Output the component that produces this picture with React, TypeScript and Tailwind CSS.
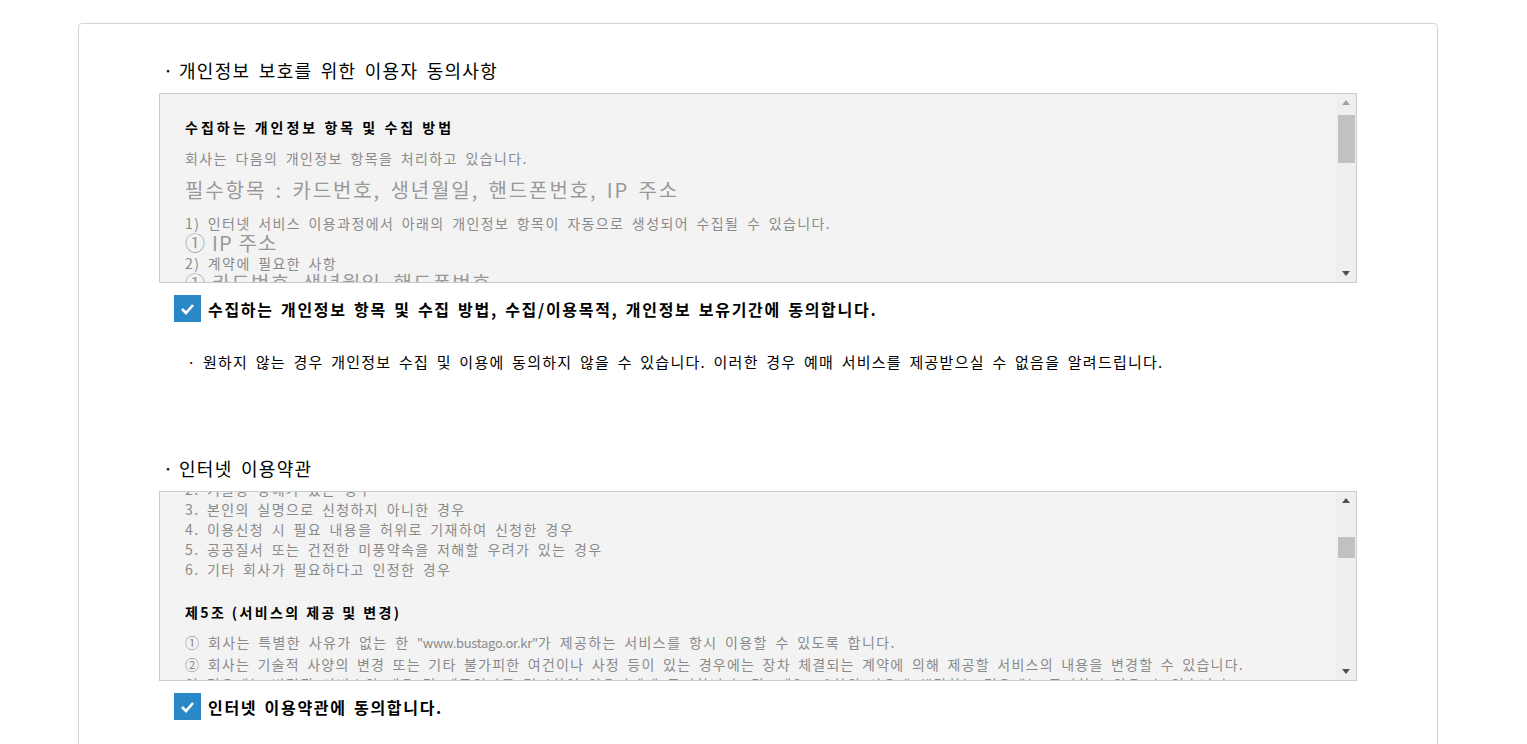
import React from 'react';

const font = 'font-["Noto_Sans_CJK_KR","Liberation_Sans",sans-serif]';

const ScrollBar: React.FC<{ thumbTop: number; thumbHeight: number; upDisabled?: boolean }> = ({
  thumbTop,
  thumbHeight,
  upDisabled,
}) => (
  <div className="w-[20px] shrink-0 bg-[#efefef] flex flex-col">
    <div className="h-[17px] flex items-center justify-center">
      <svg width="8" height="5" viewBox="0 0 8 5">
        <path d="M0 5 L4 0 L8 5 Z" fill={upDisabled ? '#a3a3a3' : '#505050'} />
      </svg>
    </div>
    <div className="flex-1 relative">
      <div
        className="absolute left-[2px] w-[17px] bg-[#c1c1c1]"
        style={{ top: thumbTop, height: thumbHeight }}
      />
    </div>
    <div className="h-[17px] flex items-center justify-center">
      <svg width="8" height="5" viewBox="0 0 8 5">
        <path d="M0 0 L8 0 L4 5 Z" fill="#505050" />
      </svg>
    </div>
  </div>
);

const Check: React.FC<{ label: string }> = ({ label }) => (
  <label className="flex items-center gap-[7px] ml-[15px] mt-[12px]">
    <span className="w-[27px] h-[27px] bg-[#2a88c9] flex items-center justify-center">
      <svg width="15" height="12" viewBox="0 0 15 12">
        <path d="M2 6 L6 10 L13 2" stroke="#fff" strokeWidth="2.6" fill="none" />
      </svg>
    </span>
    <span className="text-[16px] font-bold text-black tracking-[1.7px] [word-spacing:2px]">{label}</span>
  </label>
);

const Title: React.FC<{ text: string }> = ({ text }) => (
  <h2 className="flex items-center h-[24px] text-[18px] text-black leading-[24px]">
    <span className="w-[20px] pl-[4px]">·</span>
    <span className="tracking-[1.3px] [word-spacing:3px]">{text}</span>
  </h2>
);

const grayLine = 'text-[14px] leading-[20px] text-[#8a8a8a] tracking-[1.4px] [word-spacing:3px]';
const bigGray = 'text-[20px] leading-[20px] text-[#999999] tracking-[1.2px]';

export default function App() {
  return (
    <div className={`${font} bg-white min-h-[744px] pt-[23px]`}>
      <div className="ml-[78px] w-[1360px] border border-[#d4d4d4] rounded-[4px] px-[80px] pt-[34px] pb-[60px]">
        <Title text="개인정보 보호를 위한 이용자 동의사항" />
        <div className="mt-[11px] h-[190px] border border-[#cccccc] bg-[#f3f3f3] flex">
          <div className="flex-1 overflow-hidden pl-[25px] pt-[23px]">
            <p className="text-[14px] leading-[20px] font-bold text-black tracking-[3px]">
              수집하는 개인정보 항목 및 수집 방법
            </p>
            <p className={`${grayLine} mt-[11px]`}>회사는 다음의 개인정보 항목을 처리하고 있습니다.</p>
            <p className="text-[20px] leading-[30px] text-[#999999] mt-[7px] tracking-[1.9px] [word-spacing:3px]">
              필수항목 : 카드번호, 생년월일, 핸드폰번호, IP 주소
            </p>
            <p className={`${grayLine} mt-[8px]`}>
              1) 인터넷 서비스 이용과정에서 아래의 개인정보 항목이 자동으로 생성되어 수집될 수 있습니다.
            </p>
            <p className={bigGray}>① IP 주소</p>
            <p className={grayLine}>2) 계약에 필요한 사항</p>
            <p className={bigGray}>① 카드번호, 생년월일, 핸드폰번호</p>
          </div>
          <ScrollBar thumbTop={4} thumbHeight={48} upDisabled />
        </div>
        <Check label="수집하는 개인정보 항목 및 수집 방법, 수집/이용목적, 개인정보 보유기간에 동의합니다." />
        <p className="mt-[28px] ml-[28px] flex text-[15px] leading-[24px] text-black">
          <span className="w-[16px]">·</span>
          <span className="tracking-[1.25px] [word-spacing:3px]">
            원하지 않는 경우 개인정보 수집 및 이용에 동의하지 않을 수 있습니다. 이러한 경우 예매 서비스를 제공받으실 수
            없음을 알려드립니다.
          </span>
        </p>

        <div className="mt-[82px]">
          <Title text="인터넷 이용약관" />
        </div>
        <div className="mt-[11px] h-[190px] border border-[#cccccc] bg-[#f3f3f3] flex">
          <div className="flex-1 overflow-hidden pl-[25px]">
            <div className="-mt-[13px]">
              <p className={grayLine}>2. 기술상 장애가 있는 경우</p>
              <p className={grayLine}>3. 본인의 실명으로 신청하지 아니한 경우</p>
              <p className={grayLine}>4. 이용신청 시 필요 내용을 허위로 기재하여 신청한 경우</p>
              <p className={grayLine}>5. 공공질서 또는 건전한 미풍약속을 저해할 우려가 있는 경우</p>
              <p className={grayLine}>6. 기타 회사가 필요하다고 인정한 경우</p>
              <p className="mt-[23px] text-[14px] leading-[20px] font-bold text-black tracking-[2.4px]">
                제5조 (서비스의 제공 및 변경)
              </p>
              <p className={`${grayLine} mt-[10px]`}>
                ① 회사는 특별한 사유가 없는 한{' '}
                <span className="tracking-[-0.3px] text-[13px]">"www.bustago.or.kr"</span>가 제공하는 서비스를 항시
                이용할 수 있도록 합니다.
              </p>
              <p className={`${grayLine} mt-[1px] whitespace-nowrap tracking-[1.25px]`}>
                ② 회사는 기술적 사양의 변경 또는 기타 불가피한 여건이나 사정 등이 있는 경우에는 장차 체결되는 계약에 의해
                제공할 서비스의 내용을 변경할 수 있습니다.
              </p>
              <p className={`${grayLine} whitespace-nowrap`}>
                이 경우에는 변경된 서비스의 내용 및 제공일자를 명시하여 이용자에게 공지합니다. 단, 제6조 1항의 사유에
                해당하는 경우에는 공지하지 않을 수 있습니다.
              </p>
            </div>
          </div>
          <ScrollBar thumbTop={28} thumbHeight={21} />
        </div>
        <Check label="인터넷 이용약관에 동의합니다." />
      </div>
    </div>
  );
}
